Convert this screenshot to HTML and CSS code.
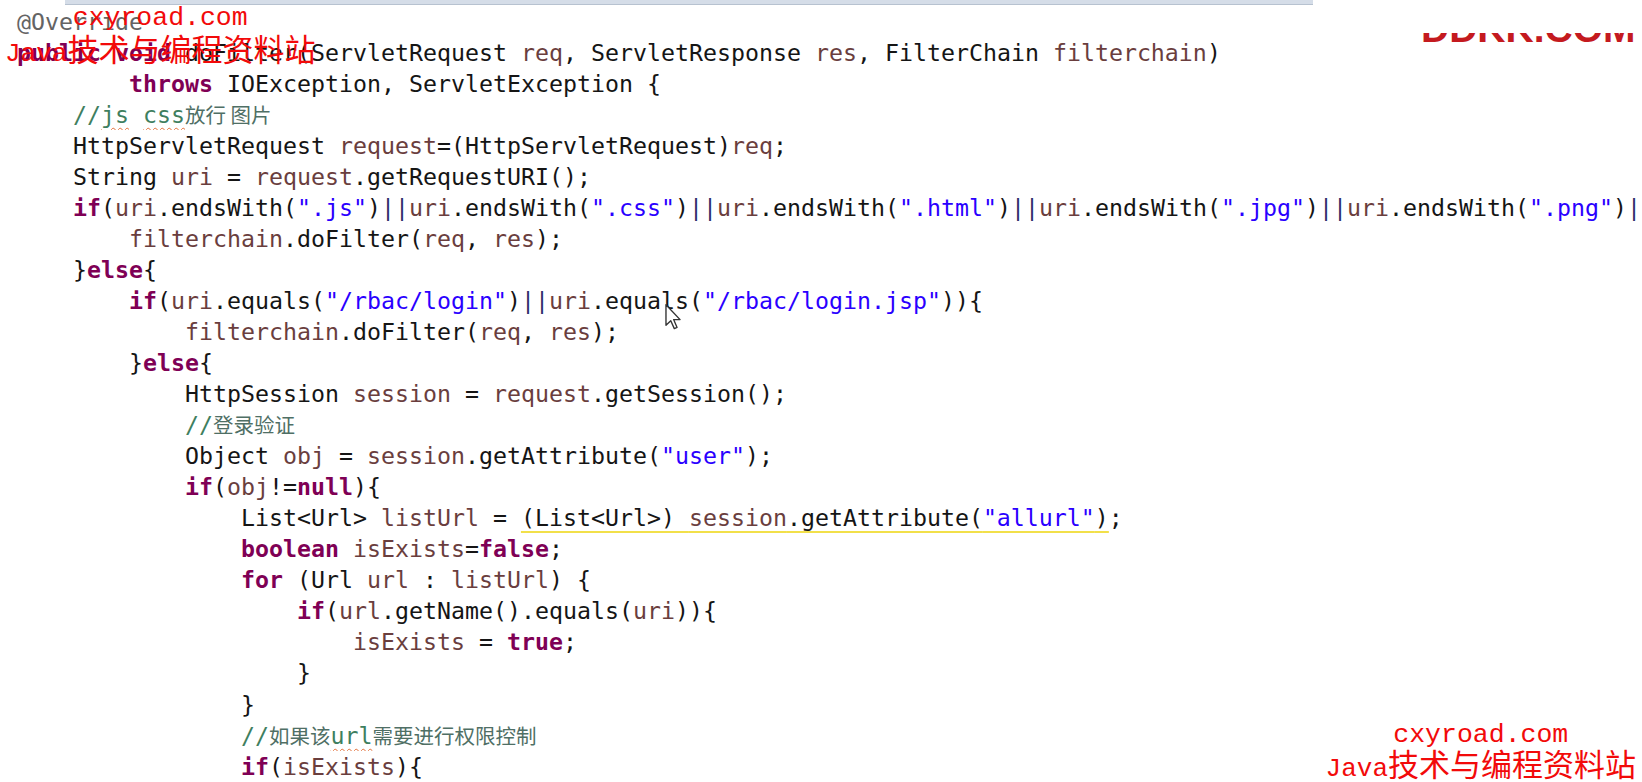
FILE: index.html
```html
<!DOCTYPE html>
<html lang="zh">
<head>
<meta charset="utf-8">
<title>Filter</title>
<link rel="stylesheet" href="styles.css">
</head>
<body>
<div class="screen">
  <div class="topbar"></div>
  <div class="code">
    <div class="line"><span class="a">@Override</span></div>
    <div class="line"><span class="k">public</span> <span class="k">void</span> doFilter(ServletRequest <span class="v">req</span>, ServletResponse <span class="v">res</span>, FilterChain <span class="v">filterchain</span>)</div>
    <div class="line">        <span class="k">throws</span> IOException, ServletException {</div>
    <div class="line">    <span class="c">//<span class="sp">js</span> <span class="sp">css</span><span class="cj">放行 图片</span></span></div>
    <div class="line">    HttpServletRequest <span class="v">request</span>=(HttpServletRequest)<span class="v">req</span>;</div>
    <div class="line">    String <span class="v">uri</span> = <span class="v">request</span>.getRequestURI();</div>
    <div class="line">    <span class="k">if</span>(<span class="v">uri</span>.endsWith(<span class="s">".js"</span>)<span class="o">||</span><span class="v">uri</span>.endsWith(<span class="s">".css"</span>)<span class="o">||</span><span class="v">uri</span>.endsWith(<span class="s">".html"</span>)<span class="o">||</span><span class="v">uri</span>.endsWith(<span class="s">".jpg"</span>)<span class="o">||</span><span class="v">uri</span>.endsWith(<span class="s">".png"</span>)<span class="o">||</span><span class="v">uri</span>.endsWith(<span class="s">".gif"</span>)){</div>
    <div class="line">        <span class="v">filterchain</span>.doFilter(<span class="v">req</span>, <span class="v">res</span>);</div>
    <div class="line">    }<span class="k">else</span>{</div>
    <div class="line">        <span class="k">if</span>(<span class="v">uri</span>.equals(<span class="s">"/rbac/login"</span>)<span class="o">||</span><span class="v">uri</span>.equals(<span class="s">"/rbac/login.jsp"</span>)){</div>
    <div class="line">            <span class="v">filterchain</span>.doFilter(<span class="v">req</span>, <span class="v">res</span>);</div>
    <div class="line">        }<span class="k">else</span>{</div>
    <div class="line">            HttpSession <span class="v">session</span> = <span class="v">request</span>.getSession();</div>
    <div class="line">            <span class="c">//<span class="cj">登录验证</span></span></div>
    <div class="line">            Object <span class="v">obj</span> = <span class="v">session</span>.getAttribute(<span class="s">"user"</span>);</div>
    <div class="line">            <span class="k">if</span>(<span class="v">obj</span>!=<span class="k">null</span>){</div>
    <div class="line">                List&lt;Url&gt; <span class="v">listUrl</span> = <span class="warn">(List&lt;Url&gt;) <span class="v">session</span>.getAttribute(<span class="s">"allurl"</span>)</span>;</div>
    <div class="line">                <span class="k">boolean</span> <span class="v">isExists</span>=<span class="k">false</span>;</div>
    <div class="line">                <span class="k">for</span> (Url <span class="v">url</span> : <span class="v">listUrl</span>) {</div>
    <div class="line">                    <span class="k">if</span>(<span class="v">url</span>.getName().equals(<span class="v">uri</span>)){</div>
    <div class="line">                        <span class="v">isExists</span> = <span class="k">true</span>;</div>
    <div class="line">                    }</div>
    <div class="line">                }</div>
    <div class="line">                <span class="c">//<span class="cj">如果该</span><span class="sp">url</span><span class="cj">需要进行权限控制</span></span></div>
    <div class="line">                <span class="k">if</span>(<span class="v">isExists</span>){</div>
  </div>

  <svg class="cursor" width="17" height="26" viewBox="0 0 12 19" aria-hidden="true">
    <path d="M0.5 0.5 L0.5 15.5 L4 12.2 L6.6 18 L8.6 17.1 L6.1 11.4 L10.8 11.4 Z" fill="#fff" stroke="#333" stroke-width="1" stroke-linejoin="round"/>
  </svg>

  <div class="brand"><span class="brand-text">DDKK.COM</span></div>

  <div class="wm wm-tl">
    <span class="wm-url">cxyroad.com</span>
    <span class="wm-name"><span class="wm-latin">Java</span>技术与编程资料站</span>
  </div>
  <div class="wm wm-br">
    <span class="wm-url">cxyroad.com</span>
    <span class="wm-name"><span class="wm-latin">Java</span>技术与编程资料站</span>
  </div>
</div>
</body>
</html>
```

FILE: styles.css
```css
* { box-sizing: border-box; }

html, body {
  margin: 0;
  padding: 0;
  background: #ffffff;
}

body {
  width: 1642px;
  height: 782px;
  overflow: hidden;
}

.screen {
  position: relative;
  width: 1642px;
  height: 782px;
  overflow: hidden;
  background: #ffffff;
}

.topbar {
  margin-left: 65px;
  width: 1248px;
  height: 5px;
  background: #d5dde8;
  border-bottom: 1px solid #b7c2d0;
}

.code {
  padding-top: 0.5px;
  font-family: "DejaVu Sans Mono", "Liberation Mono", "Noto Sans CJK SC", monospace;
  font-size: 23.25px;
  line-height: 31.06px;
  color: #151515;
}

.line {
  height: 31.06px;
  padding-left: 17px;
  white-space: pre;
  overflow: hidden;
}

.k { color: #7f0055; font-weight: bold; }
.v { color: #6a3e3e; }
.s { color: #2a00ff; }
.a { color: #646464; }
.o { color: #2f2f6a; }
.c { color: #3f7f5f; }

.cj {
  font-family: "Noto Sans CJK SC", sans-serif;
  font-size: 20.5px;
  color: #4f6f65;
}

.sp {
  text-decoration: underline wavy #e2703a;
  text-decoration-thickness: 1px;
  text-underline-offset: 4px;
}

.warn {
  text-decoration: underline solid #f2e04a;
  text-decoration-thickness: 2px;
  text-underline-offset: 5px;
}

.cursor {
  position: absolute;
  left: 665px;
  top: 304px;
}

.brand {
  position: absolute;
  left: 1421px;
  top: 0;
  width: 221px;
  height: 43px;
  padding-top: 9px;
  overflow: hidden;
  clip-path: inset(33px 0 0 0);
}

.brand-text {
  display: block;
  font-family: "Liberation Sans", Arial, sans-serif;
  font-weight: bold;
  font-size: 39px;
  line-height: 39px;
  color: #c41a1f;
  white-space: nowrap;
}

.wm {
  position: absolute;
  display: flex;
  flex-direction: column;
  align-items: center;
  color: #f20a0a;
  white-space: nowrap;
  line-height: 30px;
}

.wm-url {
  font-family: "Liberation Mono", monospace;
  font-size: 26.5px;
}

.wm-name {
  font-family: "Noto Sans CJK SC", sans-serif;
  font-size: 31px;
}

.wm-latin {
  font-family: "Liberation Mono", monospace;
  font-size: 26px;
}

.wm-tl {
  left: 5px;
  top: 3px;
}

.wm-br {
  right: 6px;
  bottom: -1px;
  line-height: 28px;
}
```
